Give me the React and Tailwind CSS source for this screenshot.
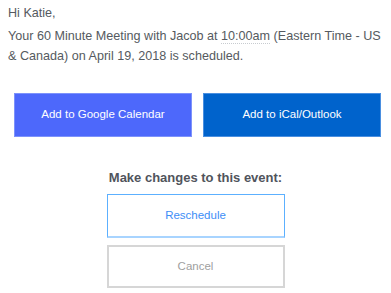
const App = () => (
    <div className="w-[391px] h-[293px] bg-white overflow-hidden" style={{ fontFamily: '"Liberation Sans", Arial, sans-serif' }}>
        <div className="pl-2 pt-[3px] text-[12.6px] leading-[20px] text-[#555a60] whitespace-nowrap">
            <p>Hi Katie,</p>
            <p className="mt-[3px]">
                Your 60 Minute Meeting with Jacob at{' '}
                <span className="border-b border-dotted border-[#c8ccd0]">10:00am</span>{' '}
                (Eastern Time - US
                <br />
                &amp; Canada) on April 19, 2018 is scheduled.
            </p>
        </div>

        <div className="flex gap-[11px] pl-[14px] mt-[27px]">
            <button className="w-[178px] h-[44px] bg-[#4d68fb] border border-[#7d92fb] text-white text-[11.5px]">
                Add to Google Calendar
            </button>
            <button className="w-[178px] h-[44px] bg-[#0063cc] border border-[#4a8fe0] text-white text-[11.5px]">
                Add to iCal/Outlook
            </button>
        </div>

        <div className="flex flex-col items-center mt-[33px]">
            <h3 className="text-[13px] leading-[16px] font-bold text-[#50545c]">Make changes to this event:</h3>
            <button className="mt-[8px] w-[178px] h-[44px] border border-[#5cb0ff] border-b-2 border-b-[#a8d4ff] text-[#3d8ef7] text-[11.5px]">
                Reschedule
            </button>
            <button className="mt-[7px] w-[178px] h-[43px] border-2 border-[#d6d6d6] text-[#a0a0a0] text-[11.5px]">
                Cancel
            </button>
        </div>
    </div>
);

export default App;
